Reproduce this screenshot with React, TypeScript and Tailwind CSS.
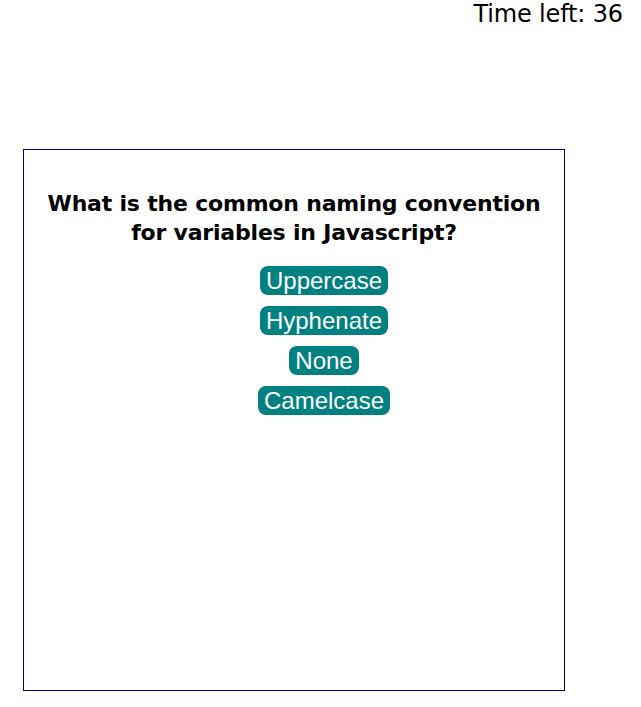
const answers = ["Uppercase", "Hyphenate", "None", "Camelcase"];

export default function App() {
  return (
    <div className="min-h-[707px] bg-white text-black">
      {/* Timer */}
      <div className="pr-[18px] text-right font-['DejaVu_Sans',sans-serif] text-[24px] leading-[28px] tracking-[-0.15px]">
        Time left: 36
      </div>

      {/* Quiz card */}
      <div className="ml-[23px] mt-[121px] flex h-[542px] w-[542px] flex-col items-center border border-[#000080] pt-[39px]">
        <h2 className="px-4 text-center font-['DejaVu_Sans',sans-serif] text-[22px] font-bold leading-[29px] tracking-[-0.2px]">
          What is the common naming convention
          <br />
          for variables in Javascript?
        </h2>
        <div className="mt-[19px] flex flex-col items-center gap-[11px] pl-[60px]">
          {answers.map((a) => (
            <button
              key={a}
              className="rounded-[8px] bg-[#008080] px-[6px] py-px font-['Liberation_Sans',Arial,sans-serif] text-[24px] leading-[27px] text-white"
            >
              {a}
            </button>
          ))}
        </div>
      </div>
    </div>
  );
}
